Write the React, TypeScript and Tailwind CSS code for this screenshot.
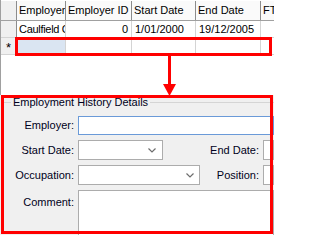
import React from "react";

const Chevron = () => (
  <svg width="8" height="5" viewBox="0 0 8 5" className="shrink-0">
    <path d="M0.5 0.5 L4 4 L7.5 0.5" fill="none" stroke="#6d6d6d" strokeWidth="1.2" />
  </svg>
);

export default function App() {
  const font = { fontFamily: '"Liberation Sans", Arial, sans-serif' };
  return (
    <div
      className="relative w-[274px] h-[235px] overflow-hidden bg-white text-[11px] text-black"
      style={font}
    >
      {/* Datasheet */}
      <div className="h-[95px] border-l border-[#a0a0a0]">
        <div className="flex h-[21px] border-b border-[#a0a0a0] pt-[1px]">
          <div className="w-[16px] shrink-0 bg-[#f0f0f0] border-r border-[#8c8c8c]" />
          <div className="w-[49px] shrink-0 border-r border-[#8c8c8c] bg-[#fafafa] pl-[2px] leading-[19px] overflow-hidden whitespace-nowrap">Employer</div>
          <div className="w-[66px] shrink-0 border-r border-[#8c8c8c] bg-[#fafafa] pl-[2px] leading-[19px] whitespace-nowrap overflow-hidden">Employer ID</div>
          <div className="w-[64px] shrink-0 border-r border-[#8c8c8c] bg-[#fafafa] pl-[2px] leading-[19px] whitespace-nowrap overflow-hidden">Start Date</div>
          <div className="w-[65px] shrink-0 border-r border-[#8c8c8c] bg-[#fafafa] pl-[2px] leading-[19px] whitespace-nowrap overflow-hidden">End Date</div>
          <div className="flex-1 bg-[#fafafa] pl-[2px] leading-[19px] whitespace-nowrap overflow-hidden">FTE</div>
        </div>
        <div className="flex h-[17px] border-b border-[#d4d4d4]">
          <div className="w-[16px] shrink-0 bg-[#f0f0f0] border-r border-[#8c8c8c]" />
          <div className="w-[49px] shrink-0 border-r border-[#d4d4d4] pl-[2px] leading-[16px] overflow-hidden whitespace-nowrap tracking-[-0.3px]">Caulfield College</div>
          <div className="w-[66px] shrink-0 border-r border-[#d4d4d4] pr-[3px] text-right leading-[16px]">0</div>
          <div className="w-[64px] shrink-0 border-r border-[#d4d4d4] pl-[3px] leading-[16px] whitespace-nowrap overflow-hidden">1/01/2000</div>
          <div className="w-[65px] shrink-0 border-r border-[#d4d4d4] pl-[3px] leading-[16px] whitespace-nowrap overflow-hidden">19/12/2005</div>
          <div className="flex-1" />
        </div>
        <div className="flex h-[17px] border-b border-[#d4d4d4]">
          <div className="w-[16px] shrink-0 bg-[#f0f0f0] border-r border-[#8c8c8c] flex items-center justify-center text-[13px] leading-none pt-[3px]">*</div>
          <div className="w-[49px] shrink-0 border-r border-[#d4d4d4] bg-[#dae5f2]" />
          <div className="w-[66px] shrink-0 border-r border-[#d4d4d4]" />
          <div className="w-[64px] shrink-0 border-r border-[#d4d4d4]" />
          <div className="w-[65px] shrink-0 border-r border-[#d4d4d4]" />
          <div className="flex-1" />
        </div>
      </div>

      {/* Form */}
      <div className="h-[140px] bg-[#f0f0f0] text-[#000020]">
        <div className="flex items-center h-[13px] pt-[1px] pl-[4px]">
          <div className="w-[7px] h-px bg-[#d5d5d5]" />
          <span className="px-[2px] whitespace-nowrap leading-[12px]">Employment History Details</span>
          <div className="flex-1 h-px bg-[#d5d5d5]" />
        </div>
        <div className="flex flex-col gap-[5px] pt-[8px]">
          <div className="flex items-center h-[19px]">
            <div className="w-[74px] shrink-0 text-right">Employer:</div>
            <div className="ml-[4px] flex-1 h-[19px] bg-white border border-[#6a9ad8]" />
          </div>
          <div className="flex items-center h-[20px]">
            <div className="w-[74px] shrink-0 text-right">Start Date:</div>
            <div className="ml-[4px] w-[85px] h-[20px] bg-white border border-[#acacac] flex items-center justify-end pr-[6px]">
              <Chevron />
            </div>
            <div className="w-[96px] shrink-0 text-right">End Date:</div>
            <div className="ml-[4px] flex-1 h-[20px] bg-white border border-[#acacac]" />
          </div>
          <div className="flex items-center h-[20px]">
            <div className="w-[74px] shrink-0 text-right">Occupation:</div>
            <div className="ml-[4px] w-[122px] h-[20px] bg-white border border-[#acacac] flex items-center justify-end pr-[5px]">
              <Chevron />
            </div>
            <div className="w-[59px] shrink-0 text-right">Position:</div>
            <div className="ml-[4px] flex-1 h-[20px] bg-white border border-[#acacac]" />
          </div>
          <div className="flex items-start">
            <div className="w-[74px] shrink-0 text-right pt-[4px]">Comment:</div>
            <div className="ml-[4px] flex-1 h-[60px] bg-white border border-[#acacac]" />
          </div>
        </div>
      </div>

      {/* Annotations */}
      <div className="absolute left-[15px] top-[37px] w-[257px] h-[19px] border-[3px] border-[#ff0000]" />
      <div className="absolute left-[168px] top-[56px] w-[3px] h-[29px] bg-[#ff0000]" />
      <svg className="absolute left-[163px] top-[84px]" width="13" height="12" viewBox="0 0 13 12">
        <polygon points="0,0 13,0 6.5,12" fill="#ff0000" />
      </svg>
      <div className="absolute left-[1px] top-[95px] w-[272px] h-[139px] border-[3px] border-[#ff0000]" />
    </div>
  );
}
